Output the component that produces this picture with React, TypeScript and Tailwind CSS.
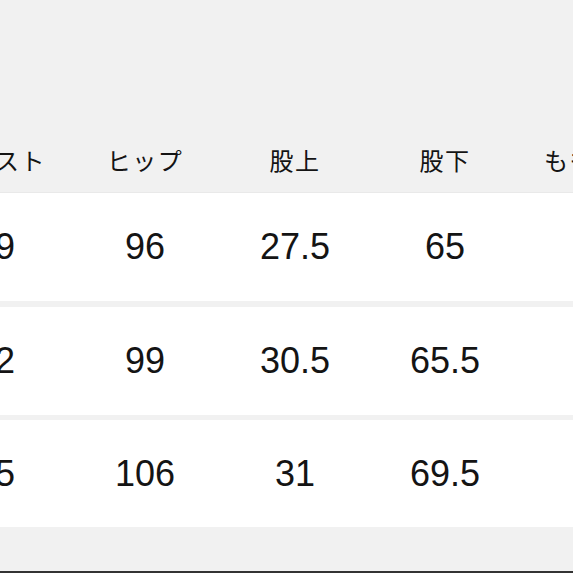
import React from "react";

const headers = ["ウエスト", "ヒップ", "股上", "股下", "もも周り"];
const rows = [
  ["69", "96", "27.5", "65", "30"],
  ["72", "99", "30.5", "65.5", "31"],
  ["75", "106", "31", "69.5", "33"],
];

export default function App() {
  return (
    <div
      className="w-[573px] h-[573px] overflow-hidden bg-[#f1f1f1] flex flex-col text-[#141414]"
      style={{ fontFamily: '"Liberation Sans", "Noto Sans CJK JP", sans-serif' }}
    >
      <div className="h-[128px] shrink-0" />
      <div className="h-[65px] shrink-0 flex ml-[-80px] border-b border-[#e9e9e9]">
        {headers.map((h) => (
          <div
            key={h}
            className="w-[150px] shrink-0 flex items-center justify-center text-[24px] tracking-[1.5px]"
            style={{ fontFamily: '"Noto Sans CJK JP", sans-serif' }}
          >
            {h}
          </div>
        ))}
      </div>
      <div className="flex flex-col">
        {rows.map((r, i) => (
          <div
            key={i}
            className={`flex ml-[-80px] bg-white shrink-0 ${
              i === 0 ? "h-[108px]" : i === 1 ? "h-[108px] mt-[6px]" : "h-[107px] mt-[5px]"
            }`}
          >
            {r.map((v, j) => (
              <div
                key={j}
                className="w-[150px] shrink-0 flex items-center justify-center text-[36px]"
              >
                {v}
              </div>
            ))}
          </div>
        ))}
      </div>
      <div className="flex-1" />
      <div className="h-[2px] bg-[#333333] shrink-0" />
    </div>
  );
}
